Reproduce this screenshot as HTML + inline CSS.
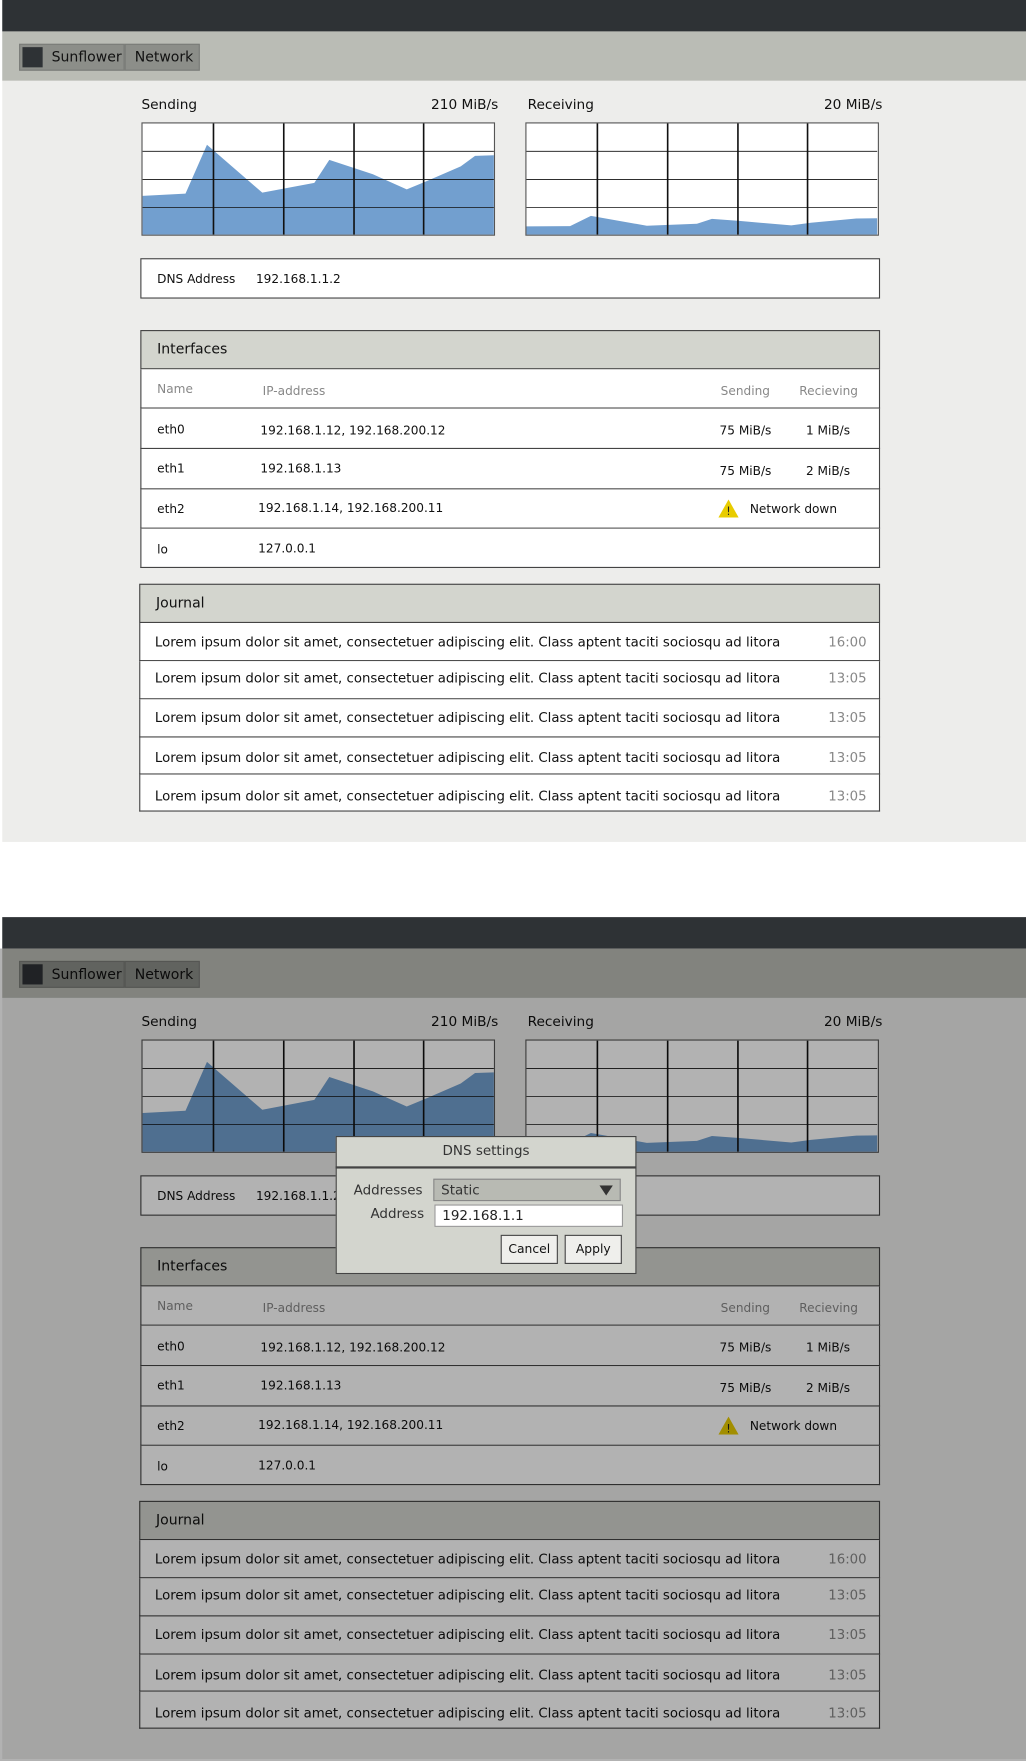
<!DOCTYPE html>
<html><head><meta charset="utf-8"><style>
*{margin:0;padding:0;box-sizing:border-box}
body{width:1026px;height:1761px;overflow:hidden;background:#fff;font-family:"DejaVu Sans","Liberation Sans",sans-serif;color:#111}
#w{position:absolute;left:0;top:0;width:914px;height:1569px;transform:scale(1.12254);transform-origin:0 0}
.scr{position:absolute;left:0;width:914px;height:750px}
.a{position:absolute;white-space:nowrap}
.bar{left:2px;top:0;width:912px;height:28px;background:#2e3235}
.tb{left:2px;top:28px;width:912px;height:44px;background:#babcb5}
.ct{left:2px;top:72px;width:912px;height:678px;background:#ededeb}
.btn{top:39px;height:24px;background:#8c8e89;border:1px solid #7a7c78;font-size:12.5px;line-height:22px;padding-left:8px}
.lbl{font-size:12.2px}
.chart{top:109px;width:315px;height:101px;background:#fff;border:1px solid #555}
.box{background:#fff;border:1px solid #444}
.hd{background:#d3d5ce;border:1px solid #444;font-size:12.5px;padding-left:14px;line-height:32px}
.row{border:1px solid #444;border-top:none;background:#fff;font-size:11px}
.t{font-size:10.8px}
.g{color:#888}
.jr{font-size:11.85px;line-height:33px;padding-left:13px;background:#fff;border:1px solid #444;border-top:none}
.jr span{position:absolute;right:11px;color:#888}
.ov{position:absolute;left:0;top:845px;width:914px;height:724px;background:rgba(0,0,0,0.3)}
</style></head><body><div id="w">

<div class="scr" style="top:0">
<div class="a bar"></div><div class="a tb"></div><div class="a ct"></div>
<div class="a btn" style="left:17px;width:94px;padding-left:28px">Sunflower</div>
<div class="a" style="left:20px;top:42px;width:18px;height:18px;background:#2e3235"></div>
<div class="a btn" style="left:111px;width:67px">Network</div>
<div class="a lbl" style="left:126px;top:86px">Sending</div>
<div class="a lbl" style="left:384px;top:86px">210 MiB/s</div>
<div class="a lbl" style="left:470px;top:86px">Receiving</div>
<div class="a lbl" style="left:734px;top:86px">20 MiB/s</div>
<svg class="a chart" style="left:126px" viewBox="216 367 540 339" preserveAspectRatio="none">
<polygon fill="#729fcf" points="216,588 282,581 315,432 400,578 480,548 503,478 570,522 622,568 650,545 705,498 727,466 756,464 756,706 216,706"/>
<g stroke="#111" stroke-width="2.5" fill="none"><path d="M325 367V706M433 367V706M541 367V706M648 367V706M216 452H756M216 538H756M216 623H756"/></g></svg>
<svg class="a chart" style="left:468px" viewBox="803 367 540 339" preserveAspectRatio="none">
<polygon fill="#729fcf" points="803,681 870,680 902,649 988,679 1065,673 1088,658 1130,664 1210,678 1240,670 1310,657 1342,656 1342,706 803,706"/>
<g stroke="#111" stroke-width="2.5" fill="none"><path d="M912 367V706M1020 367V706M1128 367V706M1235 367V706M803 452H1342M803 538H1342M803 623H1342"/></g></svg>
<div class="a box" style="left:125px;top:230px;width:659px;height:36px"></div>
<div class="a t" style="left:140px;top:242px">DNS Address</div>
<div class="a t" style="left:228px;top:242px">192.168.1.1.2</div>
<div class="a hd" style="left:125px;top:294px;width:659px;height:35px">Interfaces</div>
<div class="a row" style="left:125px;top:329px;width:659px;height:35px"></div>
<div class="a row" style="left:125px;top:364px;width:659px;height:36px"></div>
<div class="a row" style="left:125px;top:400px;width:659px;height:36px"></div>
<div class="a row" style="left:125px;top:436px;width:659px;height:35px"></div>
<div class="a row" style="left:125px;top:471px;width:659px;height:35px"></div>
<div class="a g t" style="left:140px;top:340px">Name</div>
<div class="a g t" style="left:234px;top:342px">IP-address</div>
<div class="a g t" style="left:642px;top:342px">Sending</div>
<div class="a g t" style="left:712px;top:342px">Recieving</div>
<div class="a t" style="left:140px;top:376px">eth0</div>
<div class="a t" style="left:232px;top:377px">192.168.1.12, 192.168.200.12</div>
<div class="a t" style="left:641px;top:377px">75 MiB/s</div>
<div class="a t" style="left:718px;top:377px">1 MiB/s</div>
<div class="a t" style="left:140px;top:411px">eth1</div>
<div class="a t" style="left:232px;top:411px">192.168.1.13</div>
<div class="a t" style="left:641px;top:413px">75 MiB/s</div>
<div class="a t" style="left:718px;top:413px">2 MiB/s</div>
<div class="a t" style="left:140px;top:447px">eth2</div>
<div class="a t" style="left:230px;top:446px">192.168.1.14, 192.168.200.11</div>
<svg class="a" style="left:640px;top:445px" width="18" height="16" viewBox="0 0 18 16"><polygon points="9,0 18,16 0,16" fill="#e8cc00"/><text x="9" y="14" font-size="10" text-anchor="middle" fill="#222" font-family="DejaVu Sans">!</text></svg>
<div class="a t" style="left:668px;top:447px">Network down</div>
<div class="a t" style="left:140px;top:483px">lo</div>
<div class="a t" style="left:230px;top:482px">127.0.0.1</div>
<div class="a hd" style="left:124px;top:520px;width:660px;height:35px">Journal</div>
<div class="a jr" style="left:124px;top:555px;width:660px;height:34px;line-height:34px">Lorem ipsum dolor sit amet, consectetuer adipiscing elit. Class aptent taciti sociosqu ad litora<span>16:00</span></div>
<div class="a jr" style="left:124px;top:589px;width:660px;height:34px;line-height:31px">Lorem ipsum dolor sit amet, consectetuer adipiscing elit. Class aptent taciti sociosqu ad litora<span>13:05</span></div>
<div class="a jr" style="left:124px;top:623px;width:660px;height:34px">Lorem ipsum dolor sit amet, consectetuer adipiscing elit. Class aptent taciti sociosqu ad litora<span>13:05</span></div>
<div class="a jr" style="left:124px;top:657px;width:660px;height:33px;line-height:37px">Lorem ipsum dolor sit amet, consectetuer adipiscing elit. Class aptent taciti sociosqu ad litora<span>13:05</span></div>
<div class="a jr" style="left:124px;top:690px;width:660px;height:33px;line-height:38px">Lorem ipsum dolor sit amet, consectetuer adipiscing elit. Class aptent taciti sociosqu ad litora<span>13:05</span></div>
</div>

<div class="scr" style="top:817px">
<div class="a bar"></div><div class="a tb"></div><div class="a ct"></div>
<div class="a btn" style="left:17px;width:94px;padding-left:28px">Sunflower</div>
<div class="a" style="left:20px;top:42px;width:18px;height:18px;background:#2e3235"></div>
<div class="a btn" style="left:111px;width:67px">Network</div>
<div class="a lbl" style="left:126px;top:86px">Sending</div>
<div class="a lbl" style="left:384px;top:86px">210 MiB/s</div>
<div class="a lbl" style="left:470px;top:86px">Receiving</div>
<div class="a lbl" style="left:734px;top:86px">20 MiB/s</div>
<svg class="a chart" style="left:126px" viewBox="216 367 540 339" preserveAspectRatio="none">
<polygon fill="#729fcf" points="216,588 282,581 315,432 400,578 480,548 503,478 570,522 622,568 650,545 705,498 727,466 756,464 756,706 216,706"/>
<g stroke="#111" stroke-width="2.5" fill="none"><path d="M325 367V706M433 367V706M541 367V706M648 367V706M216 452H756M216 538H756M216 623H756"/></g></svg>
<svg class="a chart" style="left:468px" viewBox="803 367 540 339" preserveAspectRatio="none">
<polygon fill="#729fcf" points="803,681 870,680 902,649 988,679 1065,673 1088,658 1130,664 1210,678 1240,670 1310,657 1342,656 1342,706 803,706"/>
<g stroke="#111" stroke-width="2.5" fill="none"><path d="M912 367V706M1020 367V706M1128 367V706M1235 367V706M803 452H1342M803 538H1342M803 623H1342"/></g></svg>
<div class="a box" style="left:125px;top:230px;width:659px;height:36px"></div>
<div class="a t" style="left:140px;top:242px">DNS Address</div>
<div class="a t" style="left:228px;top:242px">192.168.1.1.2</div>
<div class="a hd" style="left:125px;top:294px;width:659px;height:35px">Interfaces</div>
<div class="a row" style="left:125px;top:329px;width:659px;height:35px"></div>
<div class="a row" style="left:125px;top:364px;width:659px;height:36px"></div>
<div class="a row" style="left:125px;top:400px;width:659px;height:36px"></div>
<div class="a row" style="left:125px;top:436px;width:659px;height:35px"></div>
<div class="a row" style="left:125px;top:471px;width:659px;height:35px"></div>
<div class="a g t" style="left:140px;top:340px">Name</div>
<div class="a g t" style="left:234px;top:342px">IP-address</div>
<div class="a g t" style="left:642px;top:342px">Sending</div>
<div class="a g t" style="left:712px;top:342px">Recieving</div>
<div class="a t" style="left:140px;top:376px">eth0</div>
<div class="a t" style="left:232px;top:377px">192.168.1.12, 192.168.200.12</div>
<div class="a t" style="left:641px;top:377px">75 MiB/s</div>
<div class="a t" style="left:718px;top:377px">1 MiB/s</div>
<div class="a t" style="left:140px;top:411px">eth1</div>
<div class="a t" style="left:232px;top:411px">192.168.1.13</div>
<div class="a t" style="left:641px;top:413px">75 MiB/s</div>
<div class="a t" style="left:718px;top:413px">2 MiB/s</div>
<div class="a t" style="left:140px;top:447px">eth2</div>
<div class="a t" style="left:230px;top:446px">192.168.1.14, 192.168.200.11</div>
<svg class="a" style="left:640px;top:445px" width="18" height="16" viewBox="0 0 18 16"><polygon points="9,0 18,16 0,16" fill="#e8cc00"/><text x="9" y="14" font-size="10" text-anchor="middle" fill="#222" font-family="DejaVu Sans">!</text></svg>
<div class="a t" style="left:668px;top:447px">Network down</div>
<div class="a t" style="left:140px;top:483px">lo</div>
<div class="a t" style="left:230px;top:482px">127.0.0.1</div>
<div class="a hd" style="left:124px;top:520px;width:660px;height:35px">Journal</div>
<div class="a jr" style="left:124px;top:555px;width:660px;height:34px;line-height:34px">Lorem ipsum dolor sit amet, consectetuer adipiscing elit. Class aptent taciti sociosqu ad litora<span>16:00</span></div>
<div class="a jr" style="left:124px;top:589px;width:660px;height:34px;line-height:31px">Lorem ipsum dolor sit amet, consectetuer adipiscing elit. Class aptent taciti sociosqu ad litora<span>13:05</span></div>
<div class="a jr" style="left:124px;top:623px;width:660px;height:34px">Lorem ipsum dolor sit amet, consectetuer adipiscing elit. Class aptent taciti sociosqu ad litora<span>13:05</span></div>
<div class="a jr" style="left:124px;top:657px;width:660px;height:33px;line-height:37px">Lorem ipsum dolor sit amet, consectetuer adipiscing elit. Class aptent taciti sociosqu ad litora<span>13:05</span></div>
<div class="a jr" style="left:124px;top:690px;width:660px;height:33px;line-height:38px">Lorem ipsum dolor sit amet, consectetuer adipiscing elit. Class aptent taciti sociosqu ad litora<span>13:05</span></div>
</div>
<div class="ov"></div>

<div class="a" style="left:299px;top:1012px;width:268px;height:123px;background:#d3d5ce;border:1px solid #444"></div>
<div class="a" style="left:299px;top:1039px;width:268px;height:2px;background:#444"></div>
<div class="a" style="left:299px;top:1018px;width:268px;text-align:center;font-size:12px;color:#333">DNS settings</div>
<div class="a" style="left:315px;top:1053px;font-size:12px;color:#333">Addresses</div>
<div class="a" style="left:386px;top:1050px;width:167px;height:20px;background:#b8bab3;border:1px solid #888;font-size:12px;line-height:18px;padding-left:6px;color:#333">Static</div>
<svg class="a" style="left:534px;top:1056px" width="12" height="9"><polygon points="0,0 12,0 6,9" fill="#333"/></svg>
<div class="a" style="left:330px;top:1074px;font-size:12px;color:#333">Address</div>
<div class="a" style="left:387px;top:1073px;width:168px;height:20px;background:#fff;border:1px solid #999;font-size:12px;line-height:18px;padding-left:6px;color:#222">192.168.1.1</div>
<div class="a" style="left:446px;top:1100px;width:51px;height:26px;background:#efefec;border:1px solid #444;font-size:11px;line-height:24px;text-align:center">Cancel</div>
<div class="a" style="left:503px;top:1100px;width:51px;height:26px;background:#efefec;border:1px solid #444;font-size:11px;line-height:24px;text-align:center">Apply</div>
</div></body></html>
